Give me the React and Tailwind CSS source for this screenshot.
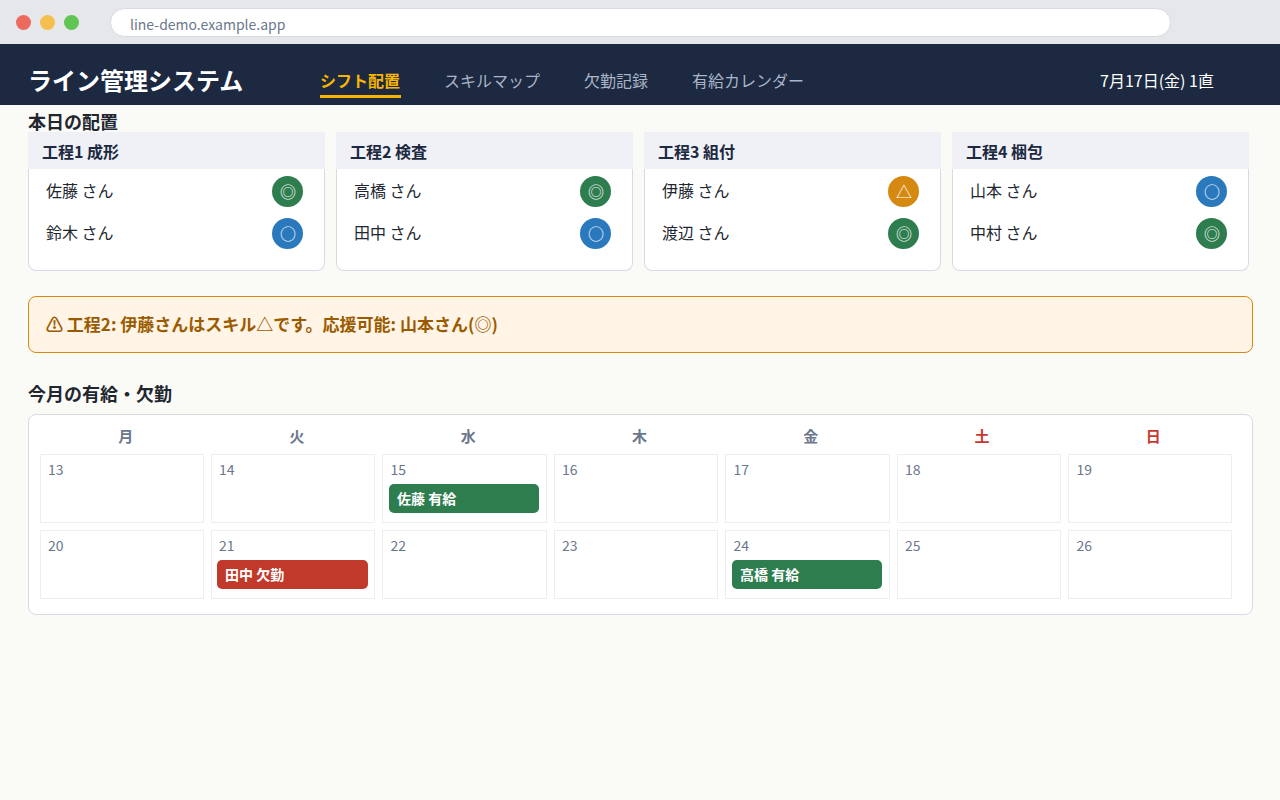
const skills = {
  best: { mark: "◎", color: "bg-[#2e7d4f]" },
  good: { mark: "○", color: "bg-[#2b79bd]" },
  fair: { mark: "△", color: "bg-[#d68910]" },
};

const stations = [
  { name: "工程1 成形", people: [["佐藤 さん", "best"], ["鈴木 さん", "good"]] },
  { name: "工程2 検査", people: [["高橋 さん", "best"], ["田中 さん", "good"]] },
  { name: "工程3 組付", people: [["伊藤 さん", "fair"], ["渡辺 さん", "best"]] },
  { name: "工程4 梱包", people: [["山本 さん", "good"], ["中村 さん", "best"]] },
];

const weekdays = ["月", "火", "水", "木", "金", "土", "日"];
const days = [13, 14, 15, 16, 17, 18, 19, 20, 21, 22, 23, 24, 25, 26];
const events = {
  15: { label: "佐藤 有給", style: "bg-[#2e7d4f] ml-1.5 w-[150px]" },
  21: { label: "田中 欠勤", style: "bg-[#c0392b] ml-[5px] w-[151px]" },
  24: { label: "高橋 有給", style: "bg-[#2e7d4f] ml-1.5 w-[150px]" },
};

function BrowserBar() {
  return (
    <div className="flex h-11 items-center bg-[#e5e7eb] pl-4">
      <div className="flex gap-[9px]">
        <span className="size-[15px] rounded-full bg-[#ed6a5e]" />
        <span className="size-[15px] rounded-full bg-[#f5bf4f]" />
        <span className="size-[15px] rounded-full bg-[#61c554]" />
      </div>
      <div className="ml-[31px] mt-px flex h-[29px] w-[1061px] items-center rounded-full border border-[#d5dae3] bg-white pl-[19px] pt-0.5 text-sm leading-5 text-[#6b778c]">
        line-demo.example.app
      </div>
    </div>
  );
}

function Header() {
  return (
    <header className="flex h-[61px] items-start bg-[#1c2941] pl-7 pt-5 text-base leading-8">
      <h1 className="w-[292px] text-2xl leading-8 font-bold text-white">ライン管理システム</h1>
      <nav className="flex gap-11 text-[#a9b4c6]">
        <a className="-mr-px h-[34px] w-[81px] border-b-3 border-[#f7b500] font-bold leading-[33px] text-[#f7b500]">シフト配置</a>
        <a>スキルマップ</a>
        <a>欠勤記録</a>
        <a>有給カレンダー</a>
      </nav>
      <span className="ml-auto w-[180px] text-white">7月17日(金) 1直</span>
    </header>
  );
}

function Station({ name, people }) {
  return (
    <section className="flex h-[139px] w-[297px] flex-col">
      <h3 className="h-[37px] bg-[#f0f1f6] pl-3.5 text-base leading-[38px] font-bold text-[#1c2941]">{name}</h3>
      <ul className="flex flex-1 flex-col gap-[11px] rounded-b-lg border border-t-0 border-[#d5dae6] bg-white pt-[7px] pr-[21px] pl-[17px]">
        {people.map(([person, skill]) => (
          <li key={person} className="flex h-[31px] items-start justify-between text-base text-[#22262f]">
            <span className="leading-[29px]">{person}</span>
            <span className={`size-[31px] rounded-full pl-px text-center text-base leading-[30px] text-white ${skills[skill].color}`}>
              {skills[skill].mark}
            </span>
          </li>
        ))}
      </ul>
    </section>
  );
}

function Calendar() {
  return (
    <section className="mt-2 h-[201px] w-[1225px] rounded-lg border border-[#d5dae6] bg-white pl-[11px]">
      <div className="grid h-[39px] w-[1199px] grid-cols-7 pt-2.5 text-center text-[15px] leading-[22px] font-bold text-[#6b778c]">
        {weekdays.map((d) => (
          <span key={d} className={d === "土" || d === "日" ? "text-[#c8372d]" : ""}>{d}</span>
        ))}
      </div>
      <div className="grid grid-cols-[164px_164px_165px_164px_165px_164px_164px] gap-[7px]">
        {days.map((d, i) => (
          <div key={d} className="h-[69px] border border-[#eceef2]">
            <div className={`h-[29px] text-sm leading-[28px] text-[#6b778c] ${[2, 4, 6].includes(i % 7) ? "pl-[7.6px]" : "pl-[7px]"}`}>{d}</div>
            {events[d] && (
              <div className={`h-[29px] rounded-[5px] pl-2 text-sm leading-[29px] font-bold text-white ${events[d].style}`}>
                {events[d].label}
              </div>
            )}
          </div>
        ))}
      </div>
    </section>
  );
}

export default function App() {
  return (
    <div className="h-[800px] w-[1280px] overflow-hidden bg-[#fafbf7] font-['Noto_Sans_CJK_JP',sans-serif]">
      <BrowserBar />
      <Header />
      <main className="px-7">
        <h2 className="h-[27px] text-lg leading-8 font-bold text-[#22262f]">本日の配置</h2>
        <div className="flex gap-[11px]">
          {stations.map((s) => (
            <Station key={s.name} {...s} />
          ))}
        </div>
        <div className="mt-[25px] h-[57px] w-[1225px] rounded-lg border border-[#d68910] bg-[#fff4e5] pl-[17px] text-[17px] leading-[54px] font-bold text-[#9a5b00]">
          ⚠ 工程2: 伊藤さんはスキル△です。応援可能: 山本さん(◎)
        </div>
        <h2 className="mt-[25px] h-7 text-lg leading-[30px] font-bold text-[#22262f]">今月の有給・欠勤</h2>
        <Calendar />
      </main>
    </div>
  );
}
